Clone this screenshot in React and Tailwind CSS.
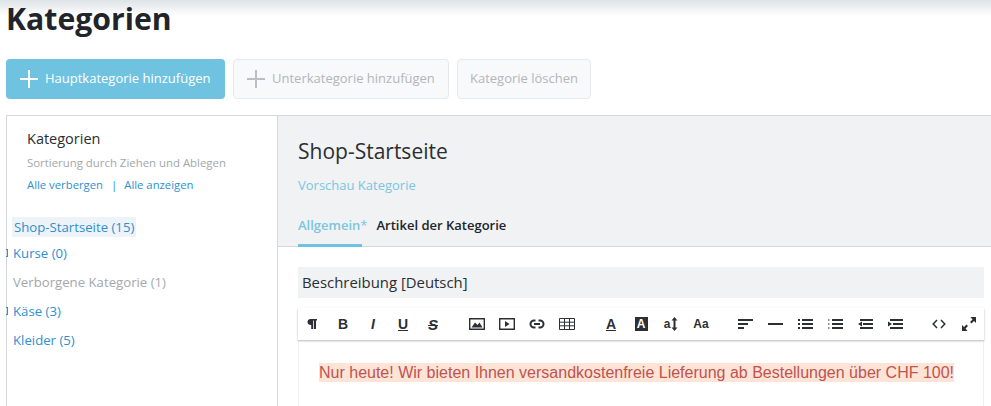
import React from "react";

const ink = "#2c2f33";

// Small toolbar glyphs drawn on a shared 16px grid
const Svg = ({ children, w = 16, h = 16 }) => (
  <svg width={w} height={h} viewBox={`0 0 ${w} ${h}`} fill={ink} shapeRendering="geometricPrecision">
    {children}
  </svg>
);

const Pilcrow = () => (
  <Svg>
    <path d="M5.500 3H12v1.600h-1V13H9V4.600H8.200V13h-2V9C3.800 9 2.500 7.900 2.500 6S3.800 3 5.500 3z" />
  </Svg>
);
const ImageIcon = () => (
  <Svg w={16} h={12}>
    <path d="M.7.700h14.600v10.600H.7z" fill="none" stroke={ink} strokeWidth="1.400" />
    <path d="M2.500 9.500 6 4.500l2.500 2.500L10.500 4.500l3 5z" />
  </Svg>
);
const VideoIcon = () => (
  <Svg w={16} h={12}>
    <path d="M.7.700h14.600v10.600H.7z" fill="none" stroke={ink} strokeWidth="1.400" />
    <path d="M6 3 10.500 6 6 9z" />
  </Svg>
);
const LinkIcon = () => (
  <Svg w={16} h={12}>
    <path
      d="M6.500 2.500H5a3.500 3.500 0 0 0 0 7h1.500M9.500 2.500H11a3.500 3.500 0 0 1 0 7H9.500M5 6h6"
      fill="none"
      stroke={ink}
      strokeWidth="2"
    />
  </Svg>
);
const TableIcon = () => (
  <Svg w={16} h={12}>
    <path
      d="M.5.500h15v11H.5zM.5 4.200h15M.5 7.800h15M5.500.500v11M10.500.500v11"
      fill="none"
      stroke={ink}
      strokeWidth="1"
    />
  </Svg>
);
const FontSizeIcon = () => (
  <span className="flex items-center gap-[1px]">
    <span className="font-['Liberation_Sans',sans-serif] text-[12px] font-bold leading-none text-[#2c2f33]">a</span>
    <svg width="7" height="14" viewBox="0 0 7 14" fill={ink}>
      <path d="M3.500 0 6.500 3.500H4.500v7h2L3.500 14 .5 10.500h2v-7h-2z" />
    </svg>
  </span>
);
const AlignIcon = () => (
  <Svg w={15} h={10}>
    <path d="M0 0h15v2H0zM0 4h10v2H0zM0 8h6v2H0z" />
  </Svg>
);
const RuleIcon = () => (
  <Svg w={15} h={10}>
    <path d="M0 4h15v2H0z" />
  </Svg>
);
const BulletIcon = () => (
  <Svg w={15} h={10}>
    <path d="M0 0h2v2H0zM0 4h2v2H0zM0 8h2v2H0zM4 0h11v2H4zM4 4h11v2H4zM4 8h11v2H4z" />
  </Svg>
);
const NumberIcon = () => (
  <Svg w={15} h={10}>
    <path d="M0 0h1.500v2H0zM0 4h1.500v2H0zM0 8h1.500v2H0z" fill="#8a8d90" />
    <path d="M4 0h11v2H4zM4 4h11v2H4zM4 8h11v2H4z" />
  </Svg>
);
const OutdentIcon = () => (
  <Svg w={15} h={10}>
    <path d="M2 0h13v2H2zM5 4h10v2H5zM2 8h13v2H2zM0 5l4-2.500v5z" />
  </Svg>
);
const IndentIcon = () => (
  <Svg w={15} h={10}>
    <path d="M2 0h13v2H2zM5 4h10v2H5zM2 8h13v2H2zM4 5 0 2.500v5z" />
  </Svg>
);
const CodeIcon = () => (
  <Svg w={14} h={10}>
    <path d="M5 1 1.200 5 5 9M9 1l3.800 4L9 9" fill="none" stroke={ink} strokeWidth="1.500" />
  </Svg>
);
const ExpandIcon = () => (
  <Svg w={14} h={14}>
    <path d="M14 0v6l-2-2-2.500 2.500-1.500-1.500L10.500 2.500 8.500 0zM0 14V8l2 2 2.500-2.500L6 9l-2.500 2.500 2 2.500z" />
  </Svg>
);

const letter = "font-['Liberation_Sans',sans-serif] text-[#2c2f33] leading-none";

const Tool = ({ children }) => (
  <span className="flex h-full w-[30px] items-center justify-center">{children}</span>
);

const Group = ({ children }) => <div className="flex h-full">{children}</div>;

function Toolbar() {
  return (
    <div className="relative z-10 ml-[298px] mr-[7px] flex h-[32px] gap-[14px] bg-white shadow-[0_1px_2px_rgba(0,0,0,0.28)]">
      <Group>
        <Tool><Pilcrow /></Tool>
        <Tool><span className={`${letter} text-[14px] font-bold`}>B</span></Tool>
        <Tool><span className={`${letter} text-[14px] font-bold italic`}>I</span></Tool>
        <Tool><span className={`${letter} text-[14px] font-bold underline`}>U</span></Tool>
        <Tool><span className={`${letter} text-[15px] font-bold line-through italic`}>S</span></Tool>
      </Group>
      <Group>
        <Tool><ImageIcon /></Tool>
        <Tool><VideoIcon /></Tool>
        <Tool><LinkIcon /></Tool>
        <Tool><TableIcon /></Tool>
      </Group>
      <Group>
        <Tool><span className={`${letter} text-[14px] font-bold underline`}>A</span></Tool>
        <Tool>
          <span className="flex h-[14px] w-[13px] items-center justify-center bg-[#2c2f33] font-['Liberation_Sans',sans-serif] text-[12px] font-bold leading-none text-white">A</span>
        </Tool>
        <Tool><FontSizeIcon /></Tool>
        <Tool><span className={`${letter} text-[12px] font-bold`}>Aa</span></Tool>
      </Group>
      <Group>
        <Tool><AlignIcon /></Tool>
        <Tool><RuleIcon /></Tool>
        <Tool><BulletIcon /></Tool>
        <Tool><NumberIcon /></Tool>
        <Tool><OutdentIcon /></Tool>
        <Tool><IndentIcon /></Tool>
      </Group>
      <Group>
        <Tool><CodeIcon /></Tool>
        <Tool><ExpandIcon /></Tool>
      </Group>
    </div>
  );
}

const Plus = ({ color }) => (
  <svg width="18" height="18" viewBox="0 0 18 18" fill={color}>
    <path d="M8 0h2v8h8v2h-8v8H8v-8H0V8h8z" />
  </svg>
);

const Tree = ({ label, muted, handle }) => (
  <div className={`relative h-[29px] pl-[6px] text-[13.200px] leading-[29px] ${muted ? "text-[#a5a8ab]" : "text-[#2f8fcf]"}`}>
    {handle && <span className="absolute -left-px top-[10px] h-[8px] w-[2px] border border-l-0 border-[#2f8fcf]" />}
    {label}
  </div>
);

export default function App() {
  return (
    <div className="relative h-[406px] w-[991px] overflow-hidden bg-white font-['Open_Sans','Noto_Sans',sans-serif]">
      {/* soft shadow cast by the page header */}
      <div className="pointer-events-none absolute inset-x-0 top-0 h-[16px] bg-gradient-to-b from-[#dde3e8] to-white/0" />

      <h1 className="relative pl-[6px] text-[30.200px] font-bold leading-[38px] text-[#212529]">Kategorien</h1>

      <div className="mt-[21px] flex gap-2 pl-[6px] text-[13px]">
        <div className="flex h-[40px] w-[219px] items-center gap-[7px] rounded-[4px] bg-[#6fc3e0] pl-[14px] text-white">
          <Plus color="#ffffff" />
          <span>Hauptkategorie hinzufügen</span>
        </div>
        <div className="flex h-[40px] w-[216px] items-center gap-[7px] rounded-[4px] border border-[#e6e8ea] bg-[#f8f9fa] pl-[13px] text-[#b3b6b9]">
          <Plus color="#bcbfc2" />
          <span>Unterkategorie hinzufügen</span>
        </div>
        <div className="flex h-[40px] w-[134px] items-center justify-center rounded-[4px] border border-[#e6e8ea] bg-[#f8f9fa] text-[#b3b6b9]">
          Kategorie löschen
        </div>
      </div>

      <div className="mt-[16px] flex h-[291px] pl-[6px]">
        <aside className="w-[272px] shrink-0 border-x border-t border-[#d5d8db] pl-[6px] pt-[12px]">
          <div className="pl-[14px]">
            <div className="text-[14.500px] leading-[22px] text-[#2b2e31]">Kategorien</div>
            <div className="mt-[3px] text-[11.400px] leading-[20px] text-[#a3a6a9]">Sortierung durch Ziehen und Ablegen</div>
            <div className="mt-[2px] flex text-[11.300px] leading-[20px] text-[#2f8fcf]">
              <span>Alle verbergen</span>
              <span className="mx-[8px]">|</span>
              <span className="-ml-[1px]">Alle anzeigen</span>
            </div>
          </div>
          <div className="-ml-[6px] mt-[19px]">
            <div className="pl-[5px]">
              <span className="inline-block h-[20px] bg-[#eef3f8] px-[2px] text-[13.200px] leading-[20px] text-[#2f8fcf]">Shop-Startseite (15)</span>
            </div>
            <div className="mt-[1px]">
              <Tree label="Kurse (0)" handle />
              <Tree label="Verborgene Kategorie (1)" muted />
              <Tree label="Käse (3)" handle />
              <Tree label="Kleider (5)" />
            </div>
          </div>
        </aside>

        <main className="min-w-0 flex-1">
          <div className="flex h-[132px] flex-col border-b border-t border-[#d5d8db] bg-[#f0f2f4] pl-[20px]">
            <div className="mt-[19px] text-[21px] leading-[32px] text-[#2b2e31]">Shop-Startseite</div>
            <div className="mt-[8px] text-[13px] leading-[20px] text-[#7cc5e0]">Vorschau Kategorie</div>
            <div className="mt-[20px] flex gap-[9px] text-[13px] font-semibold leading-[20px]">
              <span className="relative h-[31px] text-[#7cc5e0]">
                Allgemein<span className="font-normal">*</span>
                <span className="absolute inset-x-0 -bottom-px right-[6px] h-[3px] bg-[#6fc3e0]" />
              </span>
              <span className="text-[#212529]">Artikel der Kategorie</span>
            </div>
          </div>
        </main>
      </div>

      {/* editor column, laid over the right side of the split panel */}
      <div className="absolute inset-x-0 top-[267px]">
        <div className="ml-[298px] mr-[7px] flex h-[31px] items-center bg-[#f0f2f4] pl-[4px] text-[14.900px] text-[#2b2e31]">
          Beschreibung [Deutsch]
        </div>
        <div className="h-[10px]" />
        <Toolbar />
        <div className="ml-[298px] mr-[7px] h-[70px] border-x border-[#f0f1f2] pl-[20px] pt-[23px]">
          <span className="block w-fit whitespace-nowrap bg-[#fde4d7] font-['Liberation_Sans',sans-serif] text-[16px] leading-[19px] text-[#c0534e]">
            Nur heute! Wir bieten Ihnen versandkostenfreie Lieferung ab Bestellungen über CHF 100!
          </span>
        </div>
      </div>
    </div>
  );
}
